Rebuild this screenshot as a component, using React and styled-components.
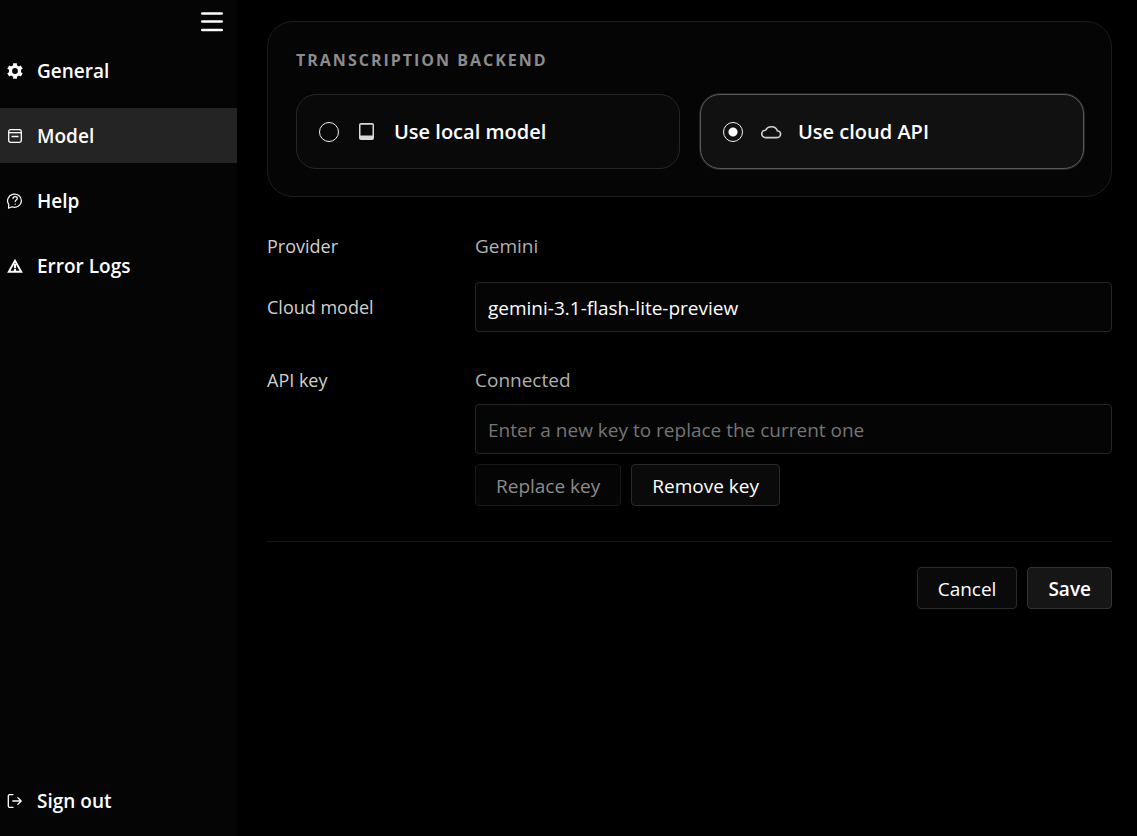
import { useState } from "react";
import styled, { createGlobalStyle } from "styled-components";

const GlobalStyle = createGlobalStyle`
  * {
    box-sizing: border-box;
  }

  body {
    margin: 0;
    background-color: #000;
    color: #fff;
    font-family: "Segoe UI", "Open Sans", "Noto Sans", sans-serif;
    font-size: 19px;
    line-height: 28px;
  }

  button, input {
    font: inherit;
    color: inherit;
  }
`

const Page = styled.div`
  display: flex;
  min-height: 100vh;
`

const Sidebar = styled.aside`
  display: flex;
  flex-direction: column;
  flex: none;
  width: 237px;
  padding-bottom: 8px;
  background-color: #050505;
`

const MenuButton = styled.button`
  align-self: flex-end;
  display: flex;
  align-items: center;
  height: 43px;
  padding: 0 14px;
  border: 0;
  background: none;
  cursor: pointer;
`

const Nav = styled.nav`
  display: flex;
  flex-direction: column;
  flex: 1;
  gap: 10px;
`

const NavItem = styled.button`
  display: flex;
  align-items: center;
  gap: 14px;
  height: 55px;
  padding: 0 7px;
  border: 0;
  background-color: ${(props) => (props.$active ? "#242424" : "transparent")};
  font-weight: 600;
  text-align: left;
  cursor: pointer;

  svg {
    flex: none;
  }
`

const SignOut = styled(NavItem)`
  margin-top: auto;
`

const Main = styled.main`
  flex: 1;
  min-width: 0;
  padding: 21px 25px 25px 30px;
`

const Backend = styled.fieldset`
  margin: 0 0 35px;
  padding: 24px 27px 27px 28px;
  border: 1px solid #1c1c1c;
  border-radius: 26px;
  background-color: #050505;
`

const BackendTitle = styled.h2`
  margin: 0 0 20px;
  color: #8c8c8c;
  font-size: 16px;
  font-weight: 700;
  letter-spacing: 2px;
  text-transform: uppercase;
`

const Options = styled.div`
  display: grid;
  grid-template-columns: 1fr 1fr;
  gap: 20px;
`

const Option = styled.label`
  display: flex;
  align-items: center;
  gap: 16px;
  height: 75px;
  padding: 0 22px;
  border: 1px solid ${(props) => (props.$checked ? "#5a5a5a" : "#262626")};
  border-radius: 20px;
  background-color: ${(props) => (props.$checked ? "#111" : "#090909")};
  box-shadow: ${(props) => (props.$checked ? "0 0 0 1px #222" : "none")};
  font-size: 20px;
  font-weight: 600;
  cursor: pointer;

  svg {
    flex: none;
  }
`

const Radio = styled.input`
  appearance: none;
  flex: none;
  width: 20px;
  height: 20px;
  margin: 0;
  border: 1px solid #f2f2f2;
  border-radius: 50%;

  &:checked {
    background: radial-gradient(circle, #fff 4px, transparent 5px);
  }
`

const Row = styled.div`
  display: grid;
  grid-template-columns: 208px 1fr;
  align-items: ${(props) => props.$align || "center"};
  margin-bottom: ${(props) => props.$space || 0}px;
`

const Label = styled.label`
  color: #d0d0d0;
  font-size: 18px;
`

const Value = styled.span`
  color: #b0b0b0;
`

const Stack = styled.div`
  display: flex;
  flex-direction: column;
  gap: 10px;
`

const TextInput = styled.input`
  width: 100%;
  height: 50px;
  padding: 1px 12px 0;
  border: 1px solid #262626;
  border-radius: 4px;
  background-color: #050505;

  &::placeholder {
    color: #757575;
    opacity: 1;
  }
`

const Buttons = styled.div`
  display: flex;
  gap: 10px;
  justify-content: ${(props) => props.$justify || "flex-start"};
`

const Button = styled.button`
  padding: 7px 20px 5px;
  border: 1px solid #2a2a2a;
  border-radius: 4px;
  background-color: #0a0a0a;
  cursor: pointer;

  &:disabled {
    border-color: #181818;
    background-color: #050505;
    color: #8c8c8c;
    cursor: default;
  }
`

const SaveButton = styled(Button)`
  border-color: #333;
  background-color: #161616;
  font-weight: 600;
`

const Footer = styled.footer`
  margin-top: 35px;
  padding-top: 25px;
  border-top: 1px solid #161616;
`

function MenuIcon() {
  return (
    <svg width="22" height="20" viewBox="0 0 22 20" stroke="#fff" strokeWidth="2.6" strokeLinecap="round">
      <path d="M1.3 1.5h19.4M1.3 9.5h19.4M1.3 18h19.4" />
    </svg>
  );
}

function GearIcon() {
  return (
    <svg width="16" height="16" viewBox="0 0 16 16" fill="none" stroke="#fff">
      <circle cx="8" cy="8" r="4.5" strokeWidth="3.2" />
      {[0, 60, 120].map((angle) => (
        <path key={angle} d="M8 .2v3M8 12.8v3" strokeWidth="3.8" transform={`rotate(${angle} 8 8)`} />
      ))}
    </svg>
  );
}

function ModelIcon() {
  return (
    <svg width="16" height="16" viewBox="0 0 16 16" fill="none" stroke="#fff" strokeWidth="1.3">
      <rect x="1.7" y="1.7" width="12.6" height="12.6" rx="1.8" />
      <path d="M1.7 4.7h12.6" />
      <path d="M4.5 8.5h7" strokeWidth="1.5" />
    </svg>
  );
}

function HelpIcon() {
  return (
    <svg width="16" height="16" viewBox="0 0 16 16" fill="none" stroke="#fff" strokeWidth="1.2" strokeLinecap="round" strokeLinejoin="round">
      <path d="M1.5 15.2l.3-3.8A6.9 6.6 0 1 1 4.9 13.800z" />
      <path d="M6 5.600c0-2.600 4.300-2.500 4.300-.1 0 1.500-2.100 1.500-2.100 3.100M8.200 11v.2" />
    </svg>
  );
}

function WarningIcon() {
  return (
    <svg width="16" height="16" viewBox="0 0 16 16" fill="none" stroke="#fff">
      <path d="M8 2.600L14.200 13.700H1.800z" strokeWidth="1.900" />
      <path d="M8 5.800v4.400M8 11v2" strokeWidth="2.200" />
    </svg>
  );
}

function SignOutIcon() {
  return (
    <svg width="16" height="16" viewBox="0 0 16 16" fill="none" stroke="#fff" strokeWidth="1.300" strokeLinecap="round" strokeLinejoin="round">
      <path d="M6 1.600H2.800a1.500 1.500 0 0 0-1.500 1.500v9.800a1.500 1.500 0 0 0 1.500 1.500H6M5.800 8h8.200M10.800 4.600L14.200 8l-3.400 3.400" />
    </svg>
  );
}

function DeviceIcon() {
  return (
    <svg width="23" height="23" viewBox="0 0 23 23">
      <path fill="#d9d9d9" fillRule="evenodd" d="M6 3h11a2 2 0 0 1 2 2v13a2 2 0 0 1-2 2H6a2 2 0 0 1-2-2V5a2 2 0 0 1 2-2zM5.500 4.700v10.800h12v-10.800z" />
    </svg>
  );
}

function CloudIcon() {
  return (
    <svg width="23" height="23" viewBox="0 0 23 23" fill="none" stroke="#d0d0d0" strokeWidth="1.600" strokeLinejoin="round">
      <path d="M6.200 17.600h11.800a3.400 3.400 0 0 0 .3-6.900A6.100 5.400 0 0 0 6.700 10.200a3.700 3.700 0 0 0-.5 7.400z" />
    </svg>
  );
}

const pages = [
  { name: "General", Icon: GearIcon },
  { name: "Model", Icon: ModelIcon },
  { name: "Help", Icon: HelpIcon },
  { name: "Error Logs", Icon: WarningIcon },
];

function App() {
  const [page, setPage] = useState("Model");
  const [backend, setBackend] = useState("cloud");
  const [model, setModel] = useState("gemini-3.1-flash-lite-preview");
  const [apiKey, setApiKey] = useState("");

  return (
    <Page>
      <GlobalStyle />

      <Sidebar>
        <MenuButton type="button" aria-label="Menu">
          <MenuIcon />
        </MenuButton>
        <Nav>
          {pages.map(({ name, Icon }) => (
            <NavItem key={name} type="button" $active={page === name} onClick={() => setPage(name)}>
              <Icon />
              {name}
            </NavItem>
          ))}
          <SignOut type="button">
            <SignOutIcon />
            Sign out
          </SignOut>
        </Nav>
      </Sidebar>

      <Main>
        <Backend aria-labelledby="backend-title">
          <BackendTitle id="backend-title">Transcription backend</BackendTitle>
          <Options>
            <Option $checked={backend === "local"}>
              <Radio type="radio" name="backend" checked={backend === "local"} onChange={() => setBackend("local")} />
              <DeviceIcon />
              Use local model
            </Option>
            <Option $checked={backend === "cloud"}>
              <Radio type="radio" name="backend" checked={backend === "cloud"} onChange={() => setBackend("cloud")} />
              <CloudIcon />
              Use cloud API
            </Option>
          </Options>
        </Backend>

        <Row $space={22}>
          <Label as="span">Provider</Label>
          <Value>Gemini</Value>
        </Row>

        <Row $space={34}>
          <Label htmlFor="model">Cloud model</Label>
          <TextInput id="model" type="text" value={model} onChange={(e) => setModel(e.target.value)} />
        </Row>

        <Row $align="start">
          <Label htmlFor="key">API key</Label>
          <Stack>
            <Value>Connected</Value>
            <TextInput
              id="key"
              type="password"
              placeholder="Enter a new key to replace the current one"
              value={apiKey}
              onChange={(e) => setApiKey(e.target.value)}
            />
            <Buttons>
              <Button type="button" disabled={!apiKey}>Replace key</Button>
              <Button type="button">Remove key</Button>
            </Buttons>
          </Stack>
        </Row>

        <Footer>
          <Buttons $justify="flex-end">
            <Button type="button">Cancel</Button>
            <SaveButton type="button">Save</SaveButton>
          </Buttons>
        </Footer>
      </Main>
    </Page>
  );
}

export default App;
